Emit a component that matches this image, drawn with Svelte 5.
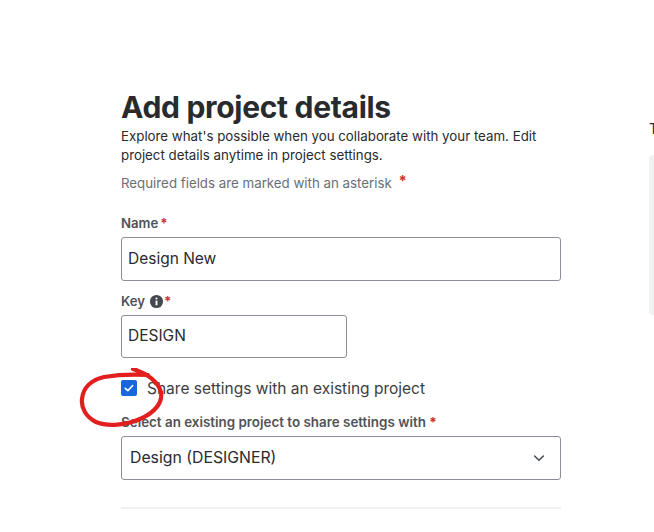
<script>
  const copy = "Explore what's possible when you collaborate with your team. Edit project details anytime in project settings.";
</script>

<div class="page">
  <main class="form">
    <h1>Add project details</h1>
    <p class="intro">{copy}</p>
    <p class="req">Required fields are marked with an asterisk <span class="star big">*</span></p>

    <label class="lab first" for="name">Name<span class="star">*</span></label>
    <div class="input full" id="name"><span class="val">Design New</span></div>

    <label class="lab key" for="key">Key
      <svg class="info" viewBox="0 0 16 16" width="15" height="15" aria-hidden="true">
        <circle cx="8" cy="8" r="7" fill="#44494f" />
        <rect x="7" y="7" width="2" height="5" fill="#fff" />
        <circle cx="8" cy="4.8" r="1.1" fill="#fff" />
      </svg><span class="star">*</span></label>
    <div class="input short" id="key"><span class="val">DESIGN</span></div>

    <div class="check">
      <span class="box">
        <svg viewBox="0 0 16 16" width="16" height="16" aria-hidden="true">
          <path d="M4.3 8.3l2.5 2.4 4.9-5.2" fill="none" stroke="#fff" stroke-width="1.6" stroke-linecap="round" stroke-linejoin="round" />
        </svg>
      </span>
      <span class="check-text">Share settings with an existing project</span>
    </div>

    <label class="lab sel" for="sel">Select an existing project to share settings with <span class="star">*</span></label>
    <div class="input select" id="sel">
      <span class="val">Design (DESIGNER)</span>
      <svg viewBox="0 0 16 16" width="16" height="16" aria-hidden="true">
        <path d="M3.6 6L8 10.2 12.4 6" fill="none" stroke="#44494f" stroke-width="1.5" stroke-linecap="round" stroke-linejoin="round" />
      </svg>
    </div>
    <hr />
  </main>

  <aside class="side">
    <div class="side-title">Template</div>
    <div class="side-card"></div>
  </aside>

  <svg class="scribble" viewBox="0 0 100 70" width="100" height="70" aria-hidden="true">
    <path d="M55 1 C68 5 80 13 83 24 C85 35 76 45 62 51 C48 57 30 59 18 54 C8 49 3 40 4 31 C5 20 13 12 26 9 C38 7 52 6 70 7" fill="none" stroke="#e31e1e" stroke-width="4.2" stroke-linecap="round" stroke-linejoin="round" />
  </svg>
</div>

<style>
  :global(body) {
    margin: 0;
    background: #fff;
  }
  .page {
    position: relative;
    width: 654px;
    height: 532px;
    overflow: hidden;
    display: flex;
    padding: 89px 0 0 121px;
    box-sizing: border-box;
    font-family: Inter, "Liberation Sans", sans-serif;
    color: #292a2e;
  }
  .form {
    width: 440px;
    flex: none;
  }
  h1 {
    margin: 0;
    font-size: 30px;
    line-height: 36px;
    font-weight: 700;
    letter-spacing: -0.3px;
  }
  .intro {
    margin: 2px 0 0;
    font-size: 13.3px;
    line-height: 19px;
    width: 425px;
  }
  .req {
    margin: 8px 0 0;
    font-size: 13.3px;
    line-height: 20px;
    color: #6b6e76;
  }
  .star {
    color: #c9372c;
    font-weight: 700;
  }
  .star.big {
    margin-left: 3px;
    font-size: 15px;
    line-height: 14px;
    vertical-align: 2px;
  }
  .lab {
    display: flex;
    align-items: center;
    gap: 2px;
    font-size: 13.2px;
    line-height: 16px;
    font-weight: 600;
    color: #505258;
  }
  .first {
    margin-top: 22px;
    height: 16px;
  }
  .key {
    margin-top: 12px;
    gap: 0;
  }
  .info {
    margin-left: 4px;
  }
  .sel {
    margin-top: 16px;
    white-space: pre;
    gap: 0;
    font-size: 13.4px;
  }
  .input {
    box-sizing: border-box;
    border: 1px solid #8c8f97;
    border-radius: 3px;
    display: flex;
    align-items: center;
    font-size: 15.5px;
    color: #292a2e;
    padding: 0 6px;
    margin-top: 6px;
  }
  .val {
    margin-bottom: 2px;
  }
  .full {
    width: 440px;
    height: 44px;
  }
  .short {
    width: 226px;
    height: 43px;
  }
  .check {
    display: flex;
    align-items: center;
    margin-top: 20px;
    height: 20px;
  }
  .box {
    width: 16px;
    height: 16px;
    border-radius: 2px;
    background: #1868db;
    flex: none;
    display: flex;
  }
  .check-text {
    margin-left: 10px;
    font-size: 15.5px;
    color: #3b3d42;
  }
  .select {
    width: 440px;
    height: 44px;
    padding: 0 13px 0 8px;
    justify-content: space-between;
    font-size: 15.8px;
  }
  hr {
    border: 0;
    height: 2px;
    background: #f0f1f2;
    margin: 27px 0 0;
    width: 440px;
  }
  .side {
    margin-left: 88px;
    flex: none;
    width: 300px;
  }
  .side-title {
    margin-top: 30px;
    font-size: 14px;
    line-height: 20px;
  }
  .side-card {
    margin-top: 16px;
    width: 280px;
    height: 160px;
    background: #f0f1f2;
    border-radius: 4px;
  }
  .scribble {
    position: absolute;
    left: 78px;
    top: 368px;
  }
</style>
